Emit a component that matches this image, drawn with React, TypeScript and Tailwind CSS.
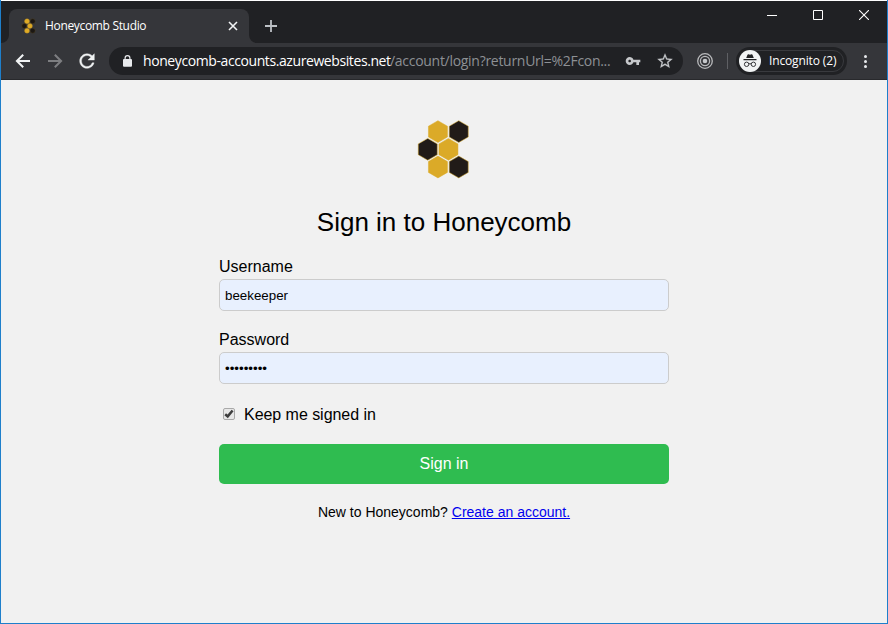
import React from 'react';

const HEX_CELLS: [number, number, boolean][] = [
  [20.2, 11.6, false],
  [41, 11.6, true],
  [10, 29.3, true],
  [30.7, 29.3, false],
  [20.2, 47, false],
  [41, 47, true],
];

function Honeycomb({ className, stroke }: { className: string; stroke: number }) {
  return (
    <svg viewBox="-0.5 0 52.5 59" className={className} aria-hidden="true">
      {HEX_CELLS.map(([x, y, dark]) => (
        <polygon
          key={`${x}-${y}`}
          points={`${x},${y - 10.9} ${x + 9.5},${y - 5.4} ${x + 9.5},${y + 5.4} ${x},${y + 10.9} ${x - 9.5},${y + 5.4} ${x - 9.5},${y - 5.4}`}
          fill={dark ? '#211b18' : '#dbaa28'}
          stroke="#dbaa28"
          strokeWidth={stroke}
        />
      ))}
    </svg>
  );
}

/* The tab icon uses round cells, which stay legible at 16 pixels. */
function TabIcon() {
  return (
    <svg viewBox="0 0 15 16" className="h-4 w-[15px]" aria-hidden="true">
      {HEX_CELLS.map(([x, y, dark]) => (
        <circle
          key={`${x}-${y}`}
          cx={0.6 + x * 0.27}
          cy={0.2 + y * 0.265}
          r="2.5"
          fill={dark ? '#1b1714' : '#e0ac26'}
          stroke={dark ? '#5c4a22' : '#a98224'}
          strokeWidth="0.4"
        />
      ))}
    </svg>
  );
}

function Glyph({ d, className }: { d: string; className: string }) {
  return (
    <svg viewBox="0 0 24 24" className={className} fill="currentColor" aria-hidden="true">
      <path d={d} />
    </svg>
  );
}

function TabStrip() {
  return (
    <div className="flex h-[42px] justify-between bg-[#202124]">
      <div className="flex">
        <svg className="h-2 w-2 self-end" viewBox="0 0 8 8"><path d="M8 0v8H0a8 8 0 0 0 8-8z" fill="#35363a" /></svg>
        <div className="mt-2 flex w-[240px] items-center rounded-t-lg bg-[#35363a] pl-[12px] pr-[11px]">
          <TabIcon />
          <span className="ml-[9px] flex-1 whitespace-nowrap text-[12px] leading-4 tracking-[-0.33px] text-white">Honeycomb Studio</span>
          <svg className="h-[10px] w-[10px]" viewBox="0 0 10 10" stroke="#f1f3f4" strokeWidth="1.6"><path d="M1 1l8 8M9 1l-8 8" /></svg>
        </div>
        <svg className="h-2 w-2 self-end" viewBox="0 0 8 8"><path d="M0 0v8h8a8 8 0 0 1-8-8z" fill="#35363a" /></svg>
        <svg className="ml-2 mt-[19px] h-3 w-3" viewBox="0 0 12 12" stroke="#bdc1c6" strokeWidth="1.8"><path d="M6 0v12M0 6h12" /></svg>
      </div>
      <div className="mr-[18px] mt-[9px] flex gap-9">
        <svg className="h-[10px] w-[10px]" viewBox="0 0 10 10" stroke="#fff"><path d="M0 5.5h10" /></svg>
        <svg className="h-[10px] w-[10px]" viewBox="0 0 10 10" stroke="#fff" fill="none"><path d="M.5.5h9v9h-9z" /></svg>
        <svg className="h-[10px] w-[10px]" viewBox="0 0 10 10" stroke="#fff" strokeWidth="1.1"><path d="M0 0l10 10M10 0L0 10" /></svg>
      </div>
    </div>
  );
}

function Toolbar() {
  const arrow = 'M20 11H7.83l5.59-5.59L12 4l-8 8 8 8 1.41-1.41L7.83 13H20v-2z';
  return (
    <div className="flex h-[37px] items-center border-b border-[#28292c] bg-[#35363a] pl-[11px]">
      <svg className="h-[22px] w-[22px]" viewBox="0 0 22 22" fill="none" stroke="#f1f3f4" strokeWidth="2"><path d="M18 11H5.5M11.2 4.7L4.9 11l6.3 6.3" /></svg>
      <svg className="ml-[10px] h-[22px] w-[22px]" viewBox="0 0 22 22" fill="none" stroke="#7d7e81" strokeWidth="2"><path d="M4 11h12.5M10.8 4.7l6.3 6.3-6.3 6.3" /></svg>
      <Glyph className="ml-[10px] h-[22px] w-[22px] stroke-[#f1f3f4] stroke-[0.4] text-[#f1f3f4]" d="M17.65 6.35C16.2 4.9 14.21 4 12 4c-4.42 0-7.99 3.58-7.99 8s3.57 8 7.99 8c3.73 0 6.84-2.55 7.73-6h-2.08c-.82 2.33-3.04 4-5.65 4-3.31 0-6-2.69-6-6s2.69-6 6-6c1.66 0 3.14.69 4.22 1.78L13 11h7V4l-2.35 2.35z" />
      <div className="ml-[11px] flex h-7 w-[574px] items-center rounded-full bg-[#202124] pl-[14px] pr-[9px]">
        <svg className="h-3 w-[9px]" viewBox="0 0 9 12" aria-hidden="true">
          <path d="M2.1 5V3a2.4 2.4 0 0 1 4.8 0v2" fill="none" stroke="#e8eaed" strokeWidth="1.2" />
          <rect x="0" y="4" width="9" height="7.7" rx="1" fill="#e8eaed" />
        </svg>
        <div className="ml-[11px] flex flex-1 whitespace-nowrap text-[14px] leading-5">
          <span className="w-[247px] tracking-[-0.41px] text-white">honeycomb-accounts.azurewebsites.net</span>
          <span className="tracking-[-0.29px] text-[#8d9094]">/account/login?returnUrl=%2Fcon...</span>
        </div>
        <Glyph className="h-4 w-4 text-[#c6c8cb]" d="M12.65 10C11.83 7.67 9.61 6 7 6c-3.31 0-6 2.69-6 6s2.69 6 6 6c2.61 0 4.83-1.67 5.65-4H17v4h4v-4h2v-4H12.65zM7 14c-1.1 0-2-.9-2-2s.9-2 2-2 2 .9 2 2-.9 2-2 2z" />
        <Glyph className="ml-[15px] h-[18px] w-[18px] stroke-[#c6c8cb] stroke-[0.3] text-[#c6c8cb]" d="M22 9.24l-7.19-.62L12 2 9.19 8.63 2 9.24l5.46 4.73L5.82 21 12 17.27 18.18 21l-1.63-7.03L22 9.24zM12 15.4l-3.76 2.27 1-4.28-3.32-2.88 4.38-.38L12 6.1l1.71 4.04 4.38.38-3.32 2.88 1 4.28L12 15.4z" />
      </div>
      <svg className="ml-[14px] h-4 w-4" viewBox="0 0 16 16" fill="none" stroke="#b9babc" aria-hidden="true">
        <circle cx="8" cy="8" r="7.3" strokeWidth="1.3" />
        <circle cx="8" cy="8" r="4.6" strokeWidth="1.3" />
        <circle cx="8" cy="8" r="2.3" fill="#c6c8cb" stroke="none" />
      </svg>
      <div className="ml-[14px] h-4 w-px bg-[#5f6064]" />
      <div className="ml-2 flex h-7 w-[111px] items-center rounded-full bg-[#202124] pl-[3px]">
        <div className="flex h-[22px] w-[105px] items-center rounded-full border border-[#393a3e]">
          <svg className="-ml-px h-[22px] w-[22px] shrink-0" viewBox="0 0 22 22" aria-hidden="true">
            <circle cx="11" cy="11" r="11" fill="#f1f3f4" />
            <path d="M7.2 8.1l1.3-3.3q.3-.7 1-.5l1.5.4 1.5-.4q.7-.2 1 .5l1.3 3.3zM4.5 9.1h13v1.2h-13z" fill="#202124" />
            <g fill="none" stroke="#35363a" strokeWidth="1"><circle cx="7.6" cy="14.3" r="2.2" /><circle cx="14.4" cy="14.3" r="2.2" /><path d="M9.8 14q1.2-.7 2.4 0" /></g>
          </svg>
          <span className="ml-2 whitespace-nowrap text-[12px] leading-4 tracking-[-0.14px] text-white">Incognito (2)</span>
        </div>
      </div>
      <div className="ml-[17px] flex flex-col gap-[2px]">
        <i className="h-[3px] w-[3px] rounded-full bg-[#e8eaed]" />
        <i className="h-[3px] w-[3px] rounded-full bg-[#e8eaed]" />
        <i className="h-[3px] w-[3px] rounded-full bg-[#e8eaed]" />
      </div>
    </div>
  );
}

export default function App() {
  return (
    <div className="flex h-[624px] w-[888px] flex-col overflow-hidden border-x border-b border-[#1e7fcb] bg-[#f1f1f1]">
      <div className="h-px shrink-0 bg-white" />
      <header className="shrink-0 font-['Open_Sans','Noto_Sans',sans-serif]">
        <TabStrip />
        <Toolbar />
      </header>
      <main className="flex flex-1 flex-col items-center font-['Liberation_Sans',Arial,sans-serif] text-black">
        <Honeycomb className="mr-[2px] mt-10 h-[59px] w-[53px]" stroke={0.5} />
        <h1 className="mt-[28px] whitespace-nowrap text-[26px] leading-[30px]">Sign in to Honeycomb</h1>
        <form className="mt-[21px] flex w-[450px] flex-col" onSubmit={(e) => e.preventDefault()}>
          <label htmlFor="username" className="text-[16px] leading-[18px]">Username</label>
          <input id="username" defaultValue="beekeeper" className="mt-[3px] h-8 rounded-[5px] border border-[#ccc] bg-[#e8f0fe] px-[5px] text-[13.333px] outline-none" />
          <label htmlFor="password" className="mt-5 text-[16px] leading-[18px]">Password</label>
          <input id="password" type="password" defaultValue="honeybees" className="mt-[3px] h-8 rounded-[5px] border border-[#ccc] bg-[#e8f0fe] px-[5px] text-[13.333px] outline-none" />
          <label className="ml-1 mt-[22px] flex h-[18px] items-center text-[16px] leading-[18px] tracking-[-0.04px]">
            <input type="checkbox" defaultChecked className="peer sr-only" />
            <span className="-mt-[3px] mr-[9px] flex h-3 w-3 items-center justify-center rounded-[2px] border border-[#a9a9a9] bg-[#e8e8e8]">
              <svg className="h-[10px] w-[10px]" viewBox="0 0 10 10" fill="none" stroke="#3e3e3e" strokeWidth="2.5"><path d="M1.2 5.2l2.5 2.2L8.6 1.5" /></svg>
            </span>
            Keep me signed in
          </label>
          <button className="mt-5 h-10 rounded-[5px] bg-[#2fbc50] text-[16px] text-white">Sign in</button>
        </form>
        <p className="mt-5 whitespace-nowrap text-[14px] leading-4">
          New to Honeycomb? <a href="#" className="text-[#0000ee] underline">Create an account.</a>
        </p>
      </main>
    </div>
  );
}
